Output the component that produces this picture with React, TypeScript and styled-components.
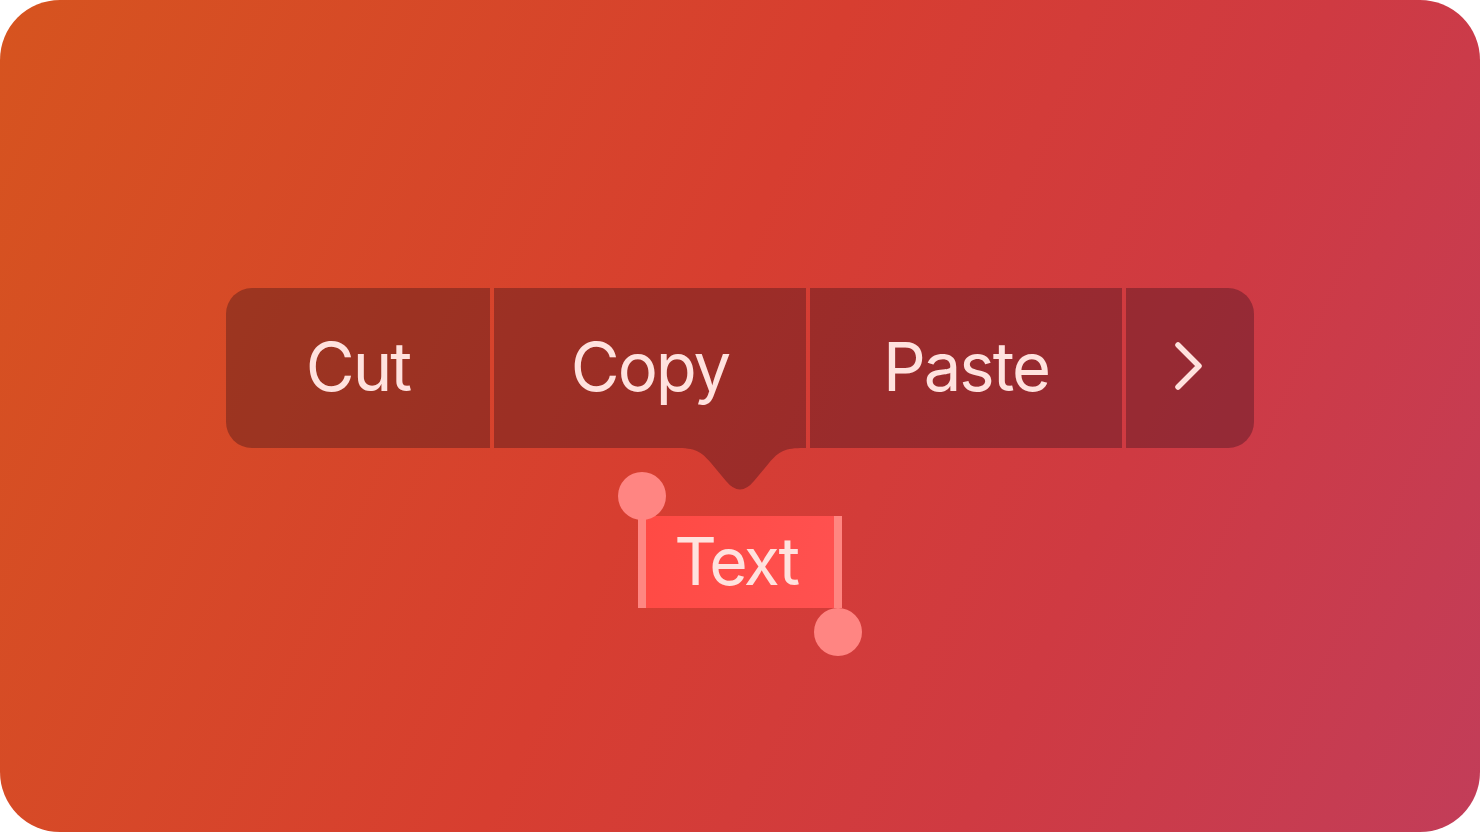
import React from "react";
import styled, { createGlobalStyle } from "styled-components";

const GlobalStyle = createGlobalStyle`
  html, body {
    margin: 0;
    padding: 0;
    background: #fff;
  }
  body {
    font-family: Inter, "Open Sans", "Liberation Sans", sans-serif;
  }
`;

const menuTint = "rgba(14, 2, 16, 0.29)";

const Card = styled.div`
  width: 1480px;
  height: 832px;
  border-radius: 60px;
  background: linear-gradient(
    114deg,
    #d6541f 0%,
    #d73e30 46%,
    #cf3a42 72%,
    #c23d59 100%
  );
  display: flex;
  flex-direction: column;
  align-items: center;
  padding-top: 288px;
  box-sizing: border-box;
`;

const Menu = styled.div`
  position: relative;
  display: flex;
  gap: 4px;
  height: 160px;
`;

const Segment = styled.div<{ $w: number; $first?: boolean; $last?: boolean }>`
  width: ${(p) => p.$w}px;
  height: 100%;
  display: flex;
  align-items: center;
  justify-content: center;
  background: ${menuTint};
  border-radius: ${(p) =>
    p.$first ? "26px 0 0 26px" : p.$last ? "0 26px 26px 0" : "0"};
  color: #ffe2de;
  font-size: 67px;
  font-weight: 400;
  letter-spacing: -2px;
  padding-bottom: 4px;
  box-sizing: border-box;
`;

const Tail = styled.svg`
  position: absolute;
  left: 450px;
  top: 160px;
  width: 128px;
  height: 46px;
`;

const Selection = styled.div`
  position: relative;
  display: flex;
  margin-top: 68px;
  height: 92px;
`;

const Bar = styled.div`
  width: 8px;
  height: 100%;
  background: #ff8681;
`;

const Fill = styled.div`
  width: 188px;
  height: 100%;
  display: flex;
  align-items: center;
  justify-content: center;
  background: linear-gradient(100deg, #ff4a44, #ff5150);
  color: #ffe2de;
  font-size: 66px;
  letter-spacing: -2.5px;
  padding-right: 8px;
  padding-bottom: 2px;
  box-sizing: border-box;
`;

const Handle = styled.div<{ $top?: boolean }>`
  position: absolute;
  width: 48px;
  height: 48px;
  border-radius: 50%;
  background: #ff8582;
  left: ${(p) => (p.$top ? "-20px" : "176px")};
  top: ${(p) => (p.$top ? "-44px" : "92px")};
`;

export default function App() {
  return (
    <>
      <GlobalStyle />
      <Card>
        <Menu>
          <Segment $w={264} $first>
            Cut
          </Segment>
          <Segment $w={312}>Copy</Segment>
          <Segment $w={312}>Paste</Segment>
          <Segment $w={128} $last>
            <svg width="36" height="56" viewBox="0 0 36 56">
              <path
                d="M6 7 L27 28 L6 49"
                fill="none"
                stroke="#ffe2de"
                strokeWidth="5.5"
                strokeLinecap="round"
                strokeLinejoin="round"
              />
            </svg>
          </Segment>
          <Tail viewBox="0 0 128 46">
            <path
              d="M0 0 C19 0 25 3 35 15 L50 33 Q64 50 78 33 L93 15 C103 3 109 0 128 0 Z"
              fill={menuTint}
            />
          </Tail>
        </Menu>
        <Selection>
          <Bar />
          <Fill>Text</Fill>
          <Bar />
          <Handle $top />
          <Handle />
        </Selection>
      </Card>
    </>
  );
}
